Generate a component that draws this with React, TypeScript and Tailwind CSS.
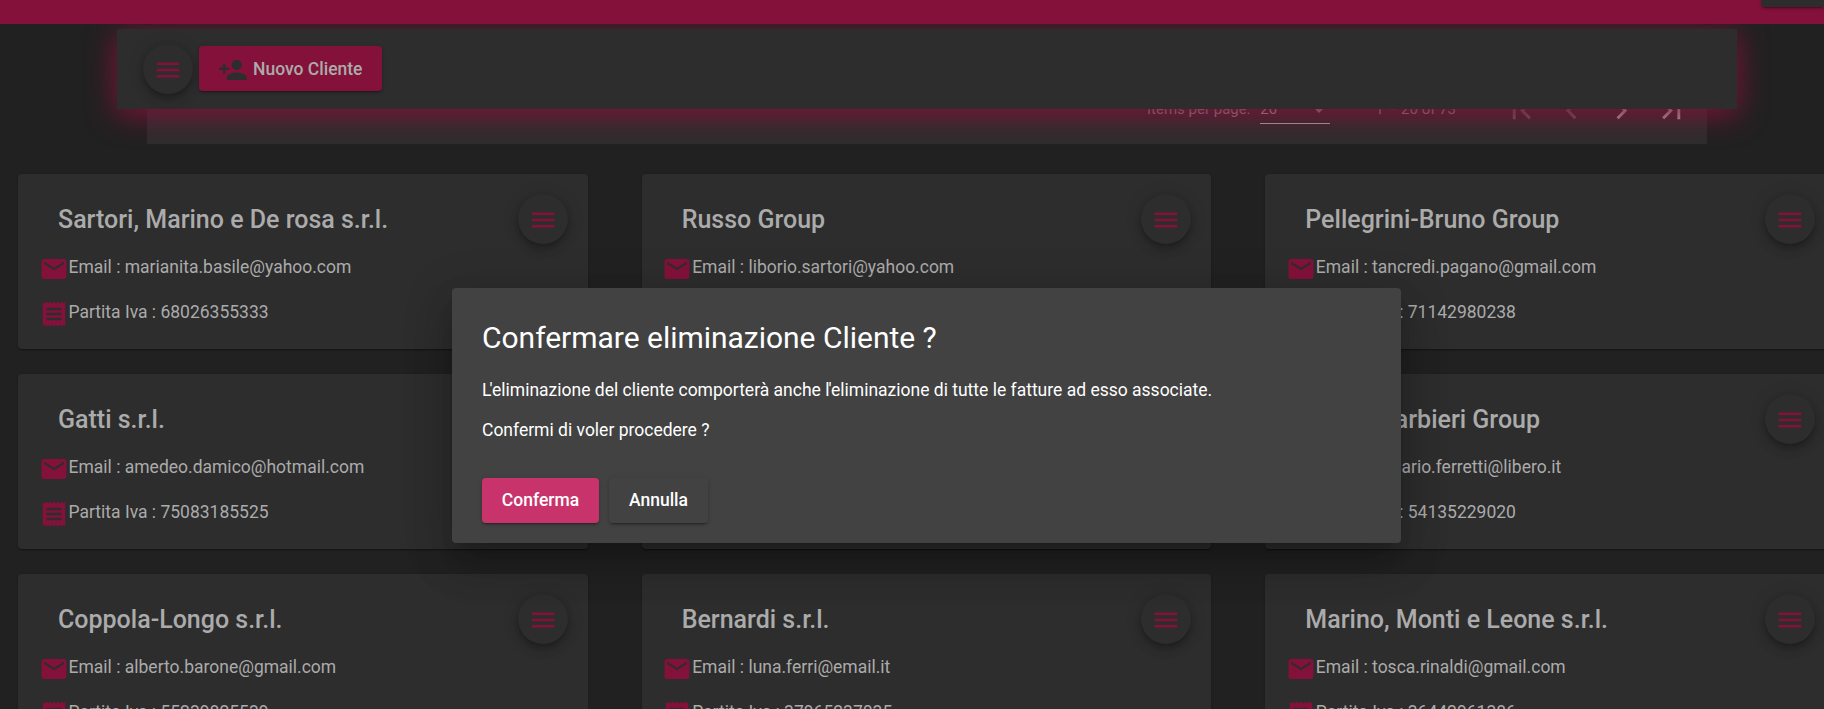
import React from "react";

type Client = { name: string; email: string; vat: string };

const clients: Client[] = [
  { name: "Sartori, Marino e De rosa s.r.l.", email: "marianita.basile@yahoo.com", vat: "68026355333" },
  { name: "Russo Group", email: "liborio.sartori@yahoo.com", vat: "42718830561" },
  { name: "Pellegrini-Bruno Group", email: "tancredi.pagano@gmail.com", vat: "71142980238" },
  { name: "Gatti s.r.l.", email: "amedeo.damico@hotmail.com", vat: "75083185525" },
  { name: "Ferri s.r.l.", email: "ferri@libero.it", vat: "61530472218" },
  { name: "Costa-Barbieri Group", email: "ky.ilario.ferretti@libero.it", vat: "54135229020" },
  { name: "Coppola-Longo s.r.l.", email: "alberto.barone@gmail.com", vat: "55239825539" },
  { name: "Bernardi s.r.l.", email: "luna.ferri@email.it", vat: "37965237035" },
  { name: "Marino, Monti e Leone s.r.l.", email: "tosca.rinaldi@gmail.com", vat: "36442961386" },
];

const paths = {
  menu: "M3 18h18v-2H3v2zm0-5h18v-2H3v2zm0-7v2h18V6H3z",
  mail: "M20 4H4c-1.1 0-1.99.9-1.99 2L2 18c0 1.1.9 2 2 2h16c1.1 0 2-.9 2-2V6c0-1.1-.9-2-2-2zm0 4l-8 5-8-5V6l8 5 8-5v2z",
  receipt: "M18 17H6v-2h12v2zm0-4H6v-2h12v2zm0-4H6V7h12v2zM3 22l1.5-1.5L6 22l1.5-1.5L9 22l1.5-1.5L12 22l1.5-1.5L15 22l1.5-1.5L18 22l1.5-1.5L21 22V2l-1.5 1.5L18 2l-1.5 1.5L15 2l-1.5 1.5L12 2l-1.5 1.5L9 2 7.5 3.5 6 2 4.5 3.5 3 2v20z",
  personAdd: "M15 12c2.21 0 4-1.79 4-4s-1.79-4-4-4-4 1.79-4 4 1.79 4 4 4zm-9-2V7H4v3H1v2h3v3h2v-3h3v-2H6zm9 4c-2.67 0-8 1.34-8 4v2h16v-2c0-2.66-5.33-4-8-4z",
  first: "M18.41 16.59L13.82 12l4.59-4.59L17 6l-6 6 6 6zM6 6h2v12H6z",
  prev: "M15.41 7.41L14 6l-6 6 6 6 1.41-1.41L10.83 12z",
  next: "M10 6L8.59 7.41 13.17 12l-4.58 4.59L10 18l6-6z",
  last: "M5.59 7.41L10.18 12l-4.59 4.59L7 18l6-6-6-6zM16 6h2v12h-2z",
};

function Icon({ name, className }: { name: keyof typeof paths; className: string }) {
  return (
    <svg viewBox="0 0 24 24" fill="currentColor" className={`shrink-0 ${className}`}>
      <path d={paths[name]} />
    </svg>
  );
}

function MenuButton() {
  return (
    <button className="flex size-[50px] shrink-0 items-center justify-center rounded-full bg-[#2d2d2d] text-[#84113a] shadow-[0_3px_5px_-1px_rgba(0,0,0,0.2),0_6px_10px_0_rgba(0,0,0,0.14),0_1px_18px_0_rgba(0,0,0,0.12)]">
      <Icon name="menu" className="mt-px size-[30px]" />
    </button>
  );
}

function ClientCard({ client }: { client: Client }) {
  return (
    <article className="h-[175px] rounded bg-[#2d2d2d] pl-[20.5px] pr-5 pt-5 text-[#ababab] shadow-[0_2px_1px_-1px_rgba(0,0,0,0.2),0_1px_1px_0_rgba(0,0,0,0.14),0_1px_3px_0_rgba(0,0,0,0.12)]">
      <div className="flex h-[50px] items-center justify-between pl-[19.5px]">
        <h2 className="pt-px text-[25px] font-medium">{client.name}</h2>
        <MenuButton />
      </div>
      <p className="mt-[9px] flex h-[27px] items-center text-[17.5px]">
        <Icon name="mail" className="mt-[5px] size-[30px] text-[#84113a]" />
        <span className="pt-px">Email : {client.email}</span>
      </p>
      <p className="mt-[18px] flex h-[27px] items-center text-[17.5px]">
        <Icon name="receipt" className="mt-[5px] size-[30px] text-[#84113a]" />
        <span className="pt-px">Partita Iva : {client.vat}</span>
      </p>
    </article>
  );
}

function Paginator() {
  return (
    <div className="ml-[147px] flex h-[68px] w-[1560px] items-center justify-end bg-[#2d2d2d] pr-[18px] text-[15px] text-[#909090]">
      <span className="mb-px mr-[10px]">Items per page:</span>
      <span className="mb-[2px] mr-[45px] flex h-[30px] w-[70px] items-center justify-between border-b border-[#ababab] pr-[5px] pt-[2px] text-[#ababab]">
        20
        <span className="border-x-[6px] border-t-[6px] border-x-transparent border-t-[#909090]" />
      </span>
      <span className="mb-px mr-[48px]">1 – 20 of 73</span>
      <div className="flex gap-[15px]">
        <Icon name="first" className="size-[35px] text-[#606060]" />
        <Icon name="prev" className="size-[35px] text-[#606060]" />
        <Icon name="next" className="size-[35px] text-[#ababab]" />
        <Icon name="last" className="size-[35px] text-[#ababab]" />
      </div>
    </div>
  );
}

export default function App() {
  return (
    <div className="relative h-[709px] w-[1824px] overflow-hidden bg-[#212121] font-['Roboto',sans-serif]">
      <div className="relative z-20 flex h-6 justify-end bg-[#84113a]">
        <div className="h-[7px] w-[63px] rounded-bl bg-[#2d2d2d] shadow-[0_3px_1px_-2px_rgba(0,0,0,0.2),0_2px_2px_0_rgba(0,0,0,0.14),0_1px_5px_0_rgba(0,0,0,0.12)]" />
      </div>
      <header className="relative z-10 ml-[117px] mt-[5px] flex h-20 w-[1620px] items-center bg-[#2d2d2d] pl-[26px] shadow-[0_5px_30px_0_#84113a]">
        <MenuButton />
        <button className="-mt-px ml-[6px] flex h-[45px] w-[183px] items-center rounded bg-[#84113a] pl-[19px] text-[17.5px] font-medium text-[#ababab] shadow-[0_3px_1px_-2px_rgba(0,0,0,0.2),0_2px_2px_0_rgba(0,0,0,0.14),0_1px_5px_0_rgba(0,0,0,0.12)]">
          <Icon name="personAdd" className="mr-[5px] mt-[3px] size-[30px] text-[#2d2d2d]" />
          <span className="pt-[2px]">Nuovo Cliente</span>
        </button>
      </header>
      <div className="-mt-[33px]">
        <Paginator />
      </div>
      <main className="ml-[18px] mt-[30px] grid w-[1817px] grid-cols-3 gap-x-[54px] gap-y-[25px]">
        {clients.map((client) => (
          <ClientCard key={client.name} client={client} />
        ))}
      </main>
      <section
        role="dialog"
        className="absolute left-[452px] top-[288px] z-30 h-[255px] w-[949px] rounded bg-[#424242] px-[30px] pt-[30px] text-white shadow-[0_11px_15px_-7px_rgba(0,0,0,0.2),0_24px_38px_3px_rgba(0,0,0,0.14),0_9px_46px_8px_rgba(0,0,0,0.12)]"
      >
        <h1 className="text-[30px] leading-[40px] tracking-[-0.02px]">Confermare eliminazione Cliente ?</h1>
        <p className="mt-[20px] text-[17.5px] leading-[25px]">
          <span className="tracking-[-2px]">L</span>'eliminazione del cliente comporterà anche <span className="tracking-[-1px]">l</span>'eliminazione di tutte le fatture ad esso associate.
        </p>
        <p className="mt-[15px] text-[17.5px] leading-[25px]">Confermi di voler procedere ?</p>
        <div className="mt-[35px] flex gap-[10px] text-[17.5px] font-medium">
          <button className="h-[45px] w-[117px] rounded bg-[#c9336b] shadow-[0_3px_1px_-2px_rgba(0,0,0,0.2),0_2px_2px_0_rgba(0,0,0,0.14),0_1px_5px_0_rgba(0,0,0,0.12)]">
            Conferma
          </button>
          <button className="h-[45px] w-[99px] rounded bg-[#424242] shadow-[0_3px_1px_-2px_rgba(0,0,0,0.2),0_2px_2px_0_rgba(0,0,0,0.14),0_1px_5px_0_rgba(0,0,0,0.12)]">
            Annulla
          </button>
        </div>
      </section>
    </div>
  );
}
